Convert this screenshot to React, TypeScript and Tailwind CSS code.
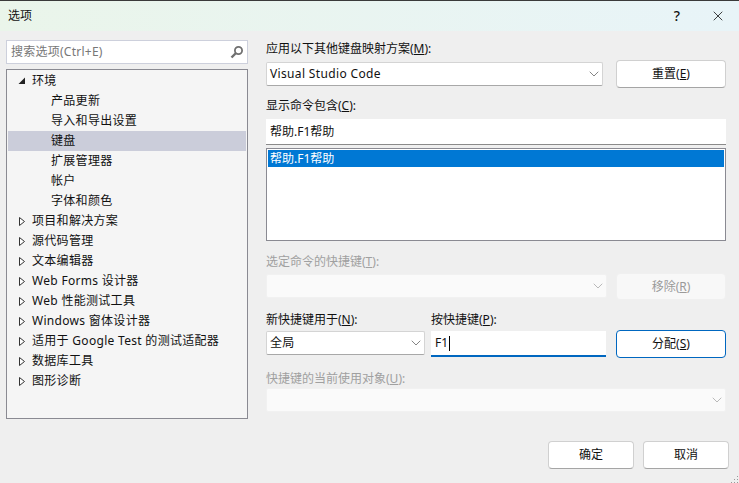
import { ChevronDown, X } from "lucide-react";
import type { ReactNode } from "react";

const font = "font-['Noto_Sans','Noto_Sans_CJK_SC',sans-serif]";

type TreeItem = { label: string; state?: "open" | "closed"; selected?: boolean };

const TREE: TreeItem[] = [
  { label: "环境", state: "open" },
  { label: "产品更新" },
  { label: "导入和导出设置" },
  { label: "键盘", selected: true },
  { label: "扩展管理器" },
  { label: "帐户" },
  { label: "字体和颜色" },
  { label: "项目和解决方案", state: "closed" },
  { label: "源代码管理", state: "closed" },
  { label: "文本编辑器", state: "closed" },
  { label: "Web Forms 设计器", state: "closed" },
  { label: "Web 性能测试工具", state: "closed" },
  { label: "Windows 窗体设计器", state: "closed" },
  { label: "适用于 Google Test 的测试适配器", state: "closed" },
  { label: "数据库工具", state: "closed" },
  { label: "图形诊断", state: "closed" },
];

function Arrow({ state }: { state?: "open" | "closed" }) {
  if (!state) return <span className="w-[19px] shrink-0" />;
  return (
    <svg width="19" height="20" viewBox="0 0 19 20" className="shrink-0">
      {state === "open" ? (
        <path d="M17 7.5V14H10.5Z" fill="#222" transform="translate(-5 -1)" />
      ) : (
        <path d="M11.5 6.5L16.5 10.5L11.5 14.5Z" fill="#fff" stroke="#333" transform="translate(-5 0)" />
      )}
    </svg>
  );
}

function Combo({ value, disabled, className }: { value?: string; disabled?: boolean; className: string }) {
  return (
    <div
      className={`flex h-6 items-center justify-between rounded-[2px] border pl-[3px] ${
        disabled ? "border-[#f1f1f1] bg-[#fafafa]" : "border-[#d4d4d4] bg-white border-b-[#a8a8a8]"
      } ${className}`}
    >
      <span className="tracking-[0.35px]">{value}</span>
      <ChevronDown size={16} strokeWidth={1.2} className={disabled ? "text-[#a8a8a8]" : "text-[#666]"} />
    </div>
  );
}

function Btn({ children, disabled, focus, className }: { children: ReactNode; disabled?: boolean; focus?: boolean; className: string }) {
  return (
    <button
      className={`flex shrink-0 items-center justify-center rounded-[4px] border ${
        disabled
          ? "border-[#f0f0f0] bg-[#f8f8f8] text-[#9a9a9a]"
          : focus
            ? "border-[#0067c0] bg-white text-[#111]"
            : "border-[#d0d0d0] border-b-[#a5a5a5] bg-white text-[#111]"
      } ${className}`}
    >
      {children}
    </button>
  );
}

export default function App() {
  return (
    <div className={`relative flex h-[483px] w-[739px] flex-col overflow-hidden bg-[#efefef] text-[12px] leading-4 text-[#111] ${font}`}>
      <div className="flex h-[31px] shrink-0 items-center justify-between border-t border-[#3a3a3a] bg-gradient-to-r from-[#eaf5ea] to-[#e8f4f8] pl-2 pr-[13px]">
        <span>选项</span>
        <div className="flex items-center gap-[30px]">
          <span className="text-[14px] font-medium">?</span>
          <X size={16} strokeWidth={1.2} />
        </div>
      </div>

      <div className="flex flex-1">
        <div className="ml-[6px] mt-[9px] flex w-[242px] shrink-0 flex-col">
          <div className="flex h-6 items-center justify-between border border-[#cdd0dc] bg-white pl-1 pr-[3px] text-[#777]">
            <span className="tracking-[0.25px]">搜索选项(Ctrl+E)</span>
            <svg width="15" height="15" viewBox="0 0 15 15">
              <circle cx="9.5" cy="5.5" r="3.6" fill="none" stroke="#707070" strokeWidth="1.8" />
              <path d="M7 8L2.5 12.5" stroke="#707070" strokeWidth="2.4" />
            </svg>
          </div>
          <div className="mt-[5px] h-[350px] border border-[#8a8a92] bg-[#f5f5f5] px-[1px] pt-[1px]">
            {TREE.map((item) => (
              <div key={item.label} className={`flex h-5 items-center ${item.selected ? "bg-[#cbcdda]" : ""}`}>
                <span className={item.state ? "w-[5px] shrink-0" : "w-[24px] shrink-0"} />
                <Arrow state={item.state} />
                <span className="tracking-[0.3px]">{item.label}</span>
              </div>
            ))}
          </div>
        </div>

        <div className="ml-[18px] flex w-[460px] shrink-0 flex-col">
          <div className="mt-[10px]">应用以下其他键盘映射方案(<u>M</u>):</div>
          <div className="mt-[3px] flex items-center justify-between">
            <Combo value="Visual Studio Code" className="w-[337px]" />
            <Btn className="h-7 w-[110px]">重置(<u>E</u>)</Btn>
          </div>
          <div className="mt-[10px]">显示命令包含(<u>C</u>):</div>
          <div className="mt-[5px] flex h-[26px] items-center border-b border-[#8a8a8a] bg-white px-1">帮助.F1帮助</div>
          <div className="mt-[3px] h-[93px] border border-[#8a8a92] bg-white p-[1px]">
            <div className="h-[17px] bg-[#0078d4] pl-[2px] pt-[1px] text-white">帮助.F1帮助</div>
          </div>

          <div className="mt-[13px] text-[#a0a0a0]">选定命令的快捷键(<u>T</u>):</div>
          <div className="mt-[3px] flex items-start justify-between">
            <Combo disabled className="mt-[1px] w-[341px]" />
            <Btn disabled className="h-[27px] w-[110px]">移除(<u>R</u>)</Btn>
          </div>

          <div className="mt-[12px] flex">
            <div className="w-[159px]">新快捷键用于(<u>N</u>):</div>
            <div className="ml-[6px]">按快捷键(<u>P</u>):</div>
          </div>
          <div className="mt-[2px] flex items-start">
            <Combo value="全局" className="mt-[1px] w-[159px]" />
            <div className="ml-[6px] mt-[1px] flex h-[26px] w-[175px] items-center border-b-2 border-[#0067c0] bg-white pl-1">
              F1<span className="ml-[1px] h-[15px] w-px bg-black" />
            </div>
            <Btn focus className="ml-[10px] h-7 w-[110px]">分配(<u>S</u>)</Btn>
          </div>

          <div className="mt-[13px] text-[#a0a0a0]">快捷键的当前使用对象(<u>U</u>):</div>
          <Combo disabled className="mt-[1px] w-[460px]" />

          <div className="ml-[282px] mt-[29px] flex gap-[9px]">
            <Btn className="h-7 w-[86px]">确定</Btn>
            <Btn className="h-7 w-[86px]">取消</Btn>
          </div>
        </div>
      </div>

      <svg width="9" height="7" viewBox="0 0 9 7" className="absolute bottom-0 right-0">
        <path d="M7 0h1v1H7zM7 3h1v1H7zM4 3h1v1H4zM7 6h1v1H7zM4 6h1v1H4zM1 6h1v1H1z" fill="#9a9a9a" />
      </svg>
    </div>
  );
}
